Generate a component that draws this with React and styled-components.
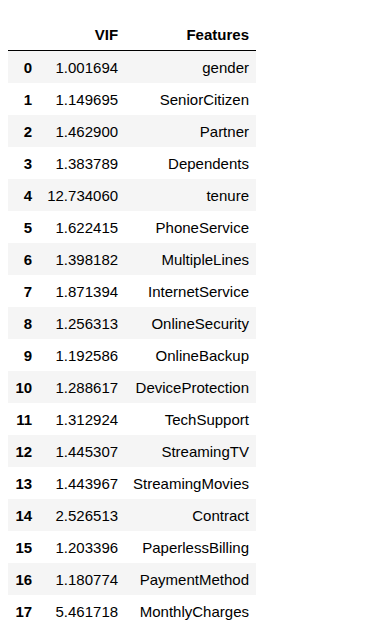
import styled, { createGlobalStyle } from "styled-components"

const rows = [
    ["1.001694", "gender"],
    ["1.149695", "SeniorCitizen"],
    ["1.462900", "Partner"],
    ["1.383789", "Dependents"],
    ["12.734060", "tenure"],
    ["1.622415", "PhoneService"],
    ["1.398182", "MultipleLines"],
    ["1.871394", "InternetService"],
    ["1.256313", "OnlineSecurity"],
    ["1.192586", "OnlineBackup"],
    ["1.288617", "DeviceProtection"],
    ["1.312924", "TechSupport"],
    ["1.445307", "StreamingTV"],
    ["1.443967", "StreamingMovies"],
    ["2.526513", "Contract"],
    ["1.203396", "PaperlessBilling"],
    ["1.180774", "PaymentMethod"],
    ["5.461718", "MonthlyCharges"],
]

const GlobalStyle = createGlobalStyle`
    body {
        margin: 0;
        background: #fff;
        font-family: "Liberation Sans", Arial, sans-serif;
    }
`

const Page = styled.div`
    padding: 18px 8px 0;
`

const DataFrame = styled.table`
    border-collapse: collapse;
    border-spacing: 0;
    font-size: 15px;
    color: #000;
`

const HeadRow = styled.tr`
    border-bottom: 1px solid #000;
`

const HeadCell = styled.th`
    text-align: right;
    font-weight: bold;
    padding: 0 7.5px;
    height: 32px;
    line-height: 17px;
`

const BodyRow = styled.tr`
    &:nth-child(odd) {
        background: #f5f5f5;
    }
`

const IndexCell = styled.th`
    text-align: right;
    font-weight: bold;
    padding: 0 7.5px;
    height: 32px;
    line-height: 17px;
`

const Cell = styled.td`
    text-align: right;
    padding: 0 7.5px;
    height: 32px;
    line-height: 17px;
`

export default function App() {
    return (
        <Page>
            <GlobalStyle />
            <DataFrame>
                <thead>
                    <HeadRow>
                        <HeadCell></HeadCell>
                        <HeadCell>VIF</HeadCell>
                        <HeadCell>Features</HeadCell>
                    </HeadRow>
                </thead>
                <tbody>
                    {rows.map(([vif, feature], i) => (
                        <BodyRow key={feature}>
                            <IndexCell>{i}</IndexCell>
                            <Cell>{vif}</Cell>
                            <Cell>{feature}</Cell>
                        </BodyRow>
                    ))}
                </tbody>
            </DataFrame>
        </Page>
    )
}
